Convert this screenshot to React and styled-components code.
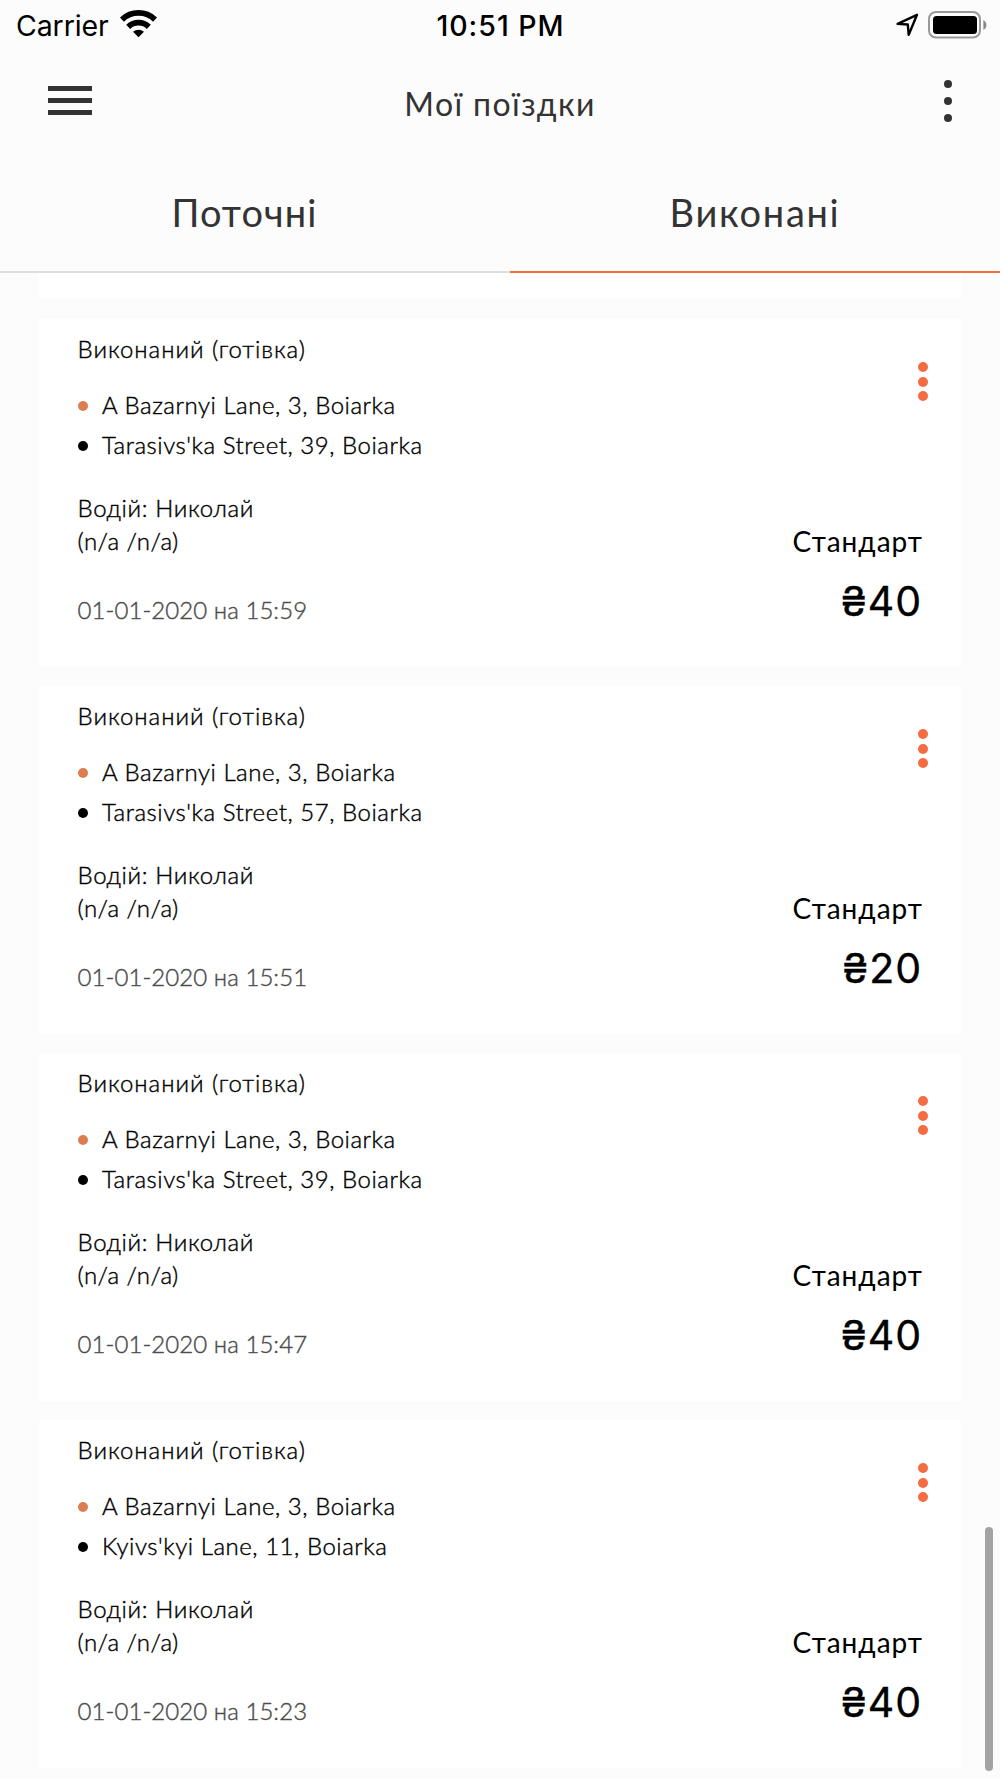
import React from "react";
import styled, { createGlobalStyle } from "styled-components";

const GlobalStyle = createGlobalStyle`
    * {
        box-sizing: border-box;
    }

    body {
        margin: 0;
        background-color: #fcfcfc;
        font-family: Lato, "Open Sans", sans-serif;
        color: #000;
        overflow: hidden;
    }
`;

const Screen = styled.div`
    position: relative;
    width: 1000px;
    height: 1778px;
    overflow: hidden;

    display: flex;
    flex-direction: column;

    background-color: #fcfcfc;
`;

const StatusBar = styled.div`
    height: 50px;
    padding: 1px 13px 0 16px;

    display: grid;
    grid-template-columns: 1fr auto 1fr;
    align-items: center;

    font-family: Inter, sans-serif;
    font-size: 28.5px;
    line-height: 49px;
`;

const Carrier = styled.div`
    display: flex;
    align-items: center;
    gap: 11px;
    letter-spacing: -0.1px;

    svg {
        margin-bottom: 3px;
    }
`;

const Time = styled.div`
    margin-right: 2px;
    font-weight: 500;
    letter-spacing: 1px;
`;

const Indicators = styled.div`
    display: flex;
    justify-content: flex-end;
    align-items: center;
    gap: 9px;
    margin-bottom: 2px;
`;

const Header = styled.header`
    height: 105px;
    padding: 0 48px;

    display: grid;
    grid-template-columns: 1fr auto 1fr;
    align-items: start;

    color: #333;
`;

const Burger = styled.div`
    width: 44px;
    margin-top: 36px;

    display: flex;
    flex-direction: column;
    gap: 7px;
`;

const Bar = styled.div`
    height: 5px;
    background-color: #333;
`;

const Title = styled.h1`
    margin: 34px 0 0;
    font-size: 32px;
    font-weight: 400;
    line-height: 40px;
    letter-spacing: 1.4px;
`;

const Dots = styled.div`
    display: flex;
    flex-direction: column;
    justify-self: end;
    gap: ${({ $gap }) => $gap}px;
    margin-top: ${({ $top }) => $top}px;

    span {
        width: ${({ $size }) => $size}px;
        height: ${({ $size }) => $size}px;
        border-radius: 50%;
        background-color: ${({ $color }) => $color};
    }
`;

const Tabs = styled.nav`
    height: 118px;
    display: grid;
    grid-template-columns: 510px 490px;
`;

const Tab = styled.div`
    padding: 34px ${({ $active }) => ($active ? 0 : 21)}px 0 0;
    border-bottom: 2px solid ${({ $active }) => ($active ? "#f56b42" : "#dedede")};

    font-size: 38px;
    line-height: 46px;
    letter-spacing: ${({ $active }) => ($active ? 1.7 : 1.1)}px;
    text-align: center;
    color: #333;
`;

const List = styled.main`
    flex: 1;
    padding: 0 39px;
    overflow: hidden;
`;

const CardEnd = styled.div`
    height: 26px;
    background-color: #fff;
`;

const Card = styled.article`
    height: 348px;
    margin-top: ${({ $first }) => ($first ? 20 : 19)}px;
    padding: 0 33px 0 38.6px;

    display: flex;
    justify-content: space-between;

    background-color: #fff;
    font-size: 24px;
    font-weight: 300;
    -webkit-text-stroke-width: 0.4px;
`;

const Info = styled.div`
    padding-top: 15px;
`;

const Status = styled.div`
    line-height: 30px;
    letter-spacing: 0.93px;
`;

const Route = styled.div`
    margin: 20px 0 27px;
`;

const Stop = styled.div`
    height: 40px;
    display: flex;
    align-items: center;
    gap: 14.4px;
    letter-spacing: 0.53px;
`;

const Bullet = styled.span`
    width: 10px;
    height: 10px;
    margin-top: 3px;
    border-radius: 50%;
    background-color: ${({ $color }) => $color};
`;

const Driver = styled.div`
    line-height: 33.3px;
    letter-spacing: 0.6px;
`;

const Vehicle = styled.div`
    line-height: 33.3px;
    letter-spacing: 0.45px;
`;

const When = styled.div`
    margin-top: 37px;
    line-height: 30px;
    letter-spacing: 0.05px;
    color: #4c4c4c;
`;

const Summary = styled.div`
    display: flex;
    flex-direction: column;
    align-items: flex-end;
`;

const Tariff = styled.div`
    margin: 123px 5px 0 0;
    font-size: 28px;
    font-weight: 400;
    line-height: 34px;
    letter-spacing: 1px;
    -webkit-text-stroke-width: 0;
`;

const Price = styled.div`
    margin: 18px 6px 0 0;
    font-family: Inter, sans-serif;
    font-size: 41px;
    font-weight: 400;
    line-height: 50px;
    letter-spacing: 1px;
    -webkit-text-stroke-width: 0.35px;
`;

const ScrollThumb = styled.div`
    position: absolute;
    top: 1527px;
    right: 7px;
    width: 8px;
    height: 244px;
    border-radius: 4px;
    background-color: #a3a3a3;
`;

const WifiIcon = () => (
    <svg width="37" height="28" viewBox="0 0 37 28">
        <g fill="none" stroke="#000" strokeWidth="5.8">
            <path d="M1.9 9.6a24 24 0 0 1 33.2 0" />
            <path d="M8.2 16.8a15 15 0 0 1 20.6 0" />
        </g>
        <path d="M18.5 27.2 13 21.8a8.2 8.2 0 0 1 11 0z" />
    </svg>
);

const LocationIcon = () => (
    <svg width="23" height="24" viewBox="0 0 23 24">
        <path
            d="M21 1.8 1.6 10.9l10.2.6.9 10.4z"
            fill="none"
            stroke="#000"
            strokeWidth="2.4"
            strokeLinejoin="round"
        />
    </svg>
);

const BatteryIcon = () => (
    <svg width="59" height="28" viewBox="0 0 59 28">
        <rect x="1" y="1" width="51" height="25.6" rx="7" fill="none" stroke="#999" strokeWidth="2" />
        <rect x="5" y="5" width="44" height="18" rx="3.5" />
        <path d="M55.4 9c4 2 4 8 0 10z" fill="#888" />
    </svg>
);

const MoreDots = (props) => (
    <Dots {...props}>
        <span />
        <span />
        <span />
    </Dots>
);

const trips = [
    { to: "Tarasivs'ka Street, 39, Boiarka", time: "15:59", price: 40 },
    { to: "Tarasivs'ka Street, 57, Boiarka", time: "15:51", price: 20 },
    { to: "Tarasivs'ka Street, 39, Boiarka", time: "15:47", price: 40 },
    { to: "Kyivs'kyi Lane, 11, Boiarka", time: "15:23", price: 40 },
];

const Trip = ({ trip, first }) => (
    <Card $first={first}>
        <Info>
            <Status>Виконаний (готівка)</Status>
            <Route>
                <Stop>
                    <Bullet $color="#dc7d50" />
                    A Bazarnyi Lane, 3, Boiarka
                </Stop>
                <Stop>
                    <Bullet $color="#000" />
                    {trip.to}
                </Stop>
            </Route>
            <Driver>Водій: Николай</Driver>
            <Vehicle>(n/a /n/a)</Vehicle>
            <When>01-01-2020 на {trip.time}</When>
        </Info>
        <Summary>
            <MoreDots $size={10} $gap={4.6} $top={43} $color="#f56b42" />
            <Tariff>Стандарт</Tariff>
            <Price>₴{trip.price}</Price>
        </Summary>
    </Card>
);

const App = () => {
    return (
        <Screen>
            <GlobalStyle />
            <StatusBar>
                <Carrier>
                    Carrier
                    <WifiIcon />
                </Carrier>
                <Time>10:51 PM</Time>
                <Indicators>
                    <LocationIcon />
                    <BatteryIcon />
                </Indicators>
            </StatusBar>
            <Header>
                <Burger>
                    <Bar />
                    <Bar />
                    <Bar />
                </Burger>
                <Title>Мої поїздки</Title>
                <MoreDots $size={8} $gap={9} $top={30} $color="#333" />
            </Header>
            <Tabs>
                <Tab>Поточні</Tab>
                <Tab $active>Виконані</Tab>
            </Tabs>
            <List>
                <CardEnd />
                {trips.map((trip, i) => (
                    <Trip key={trip.time} trip={trip} first={i === 0} />
                ))}
            </List>
            <ScrollThumb />
        </Screen>
    );
};

export default App;
